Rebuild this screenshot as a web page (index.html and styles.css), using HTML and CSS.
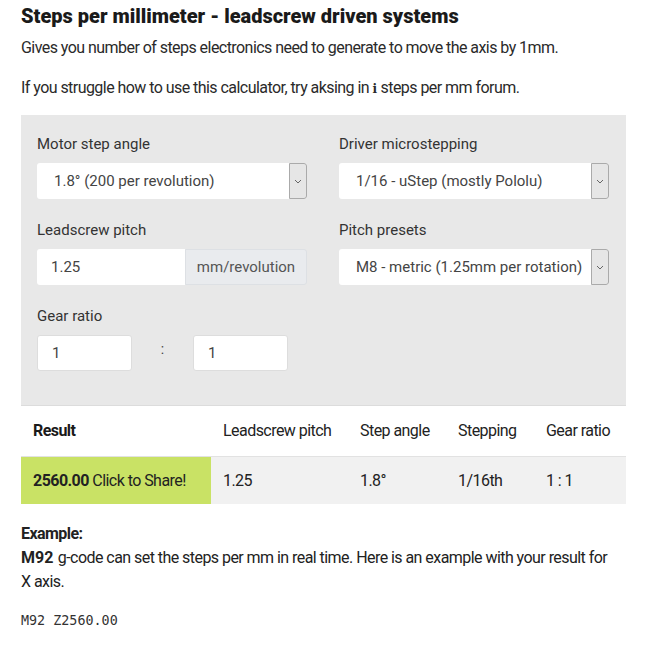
FILE: index.html
```html
<!DOCTYPE html>
<html>
<head>
    <title>Steps per millimeter - leadscrew</title>
    <link rel="stylesheet" href="styles.css">
</head>
<body>
    <div class="page">
        <h1>Steps per millimeter - leadscrew driven systems</h1>
        <p class="intro">Gives you number of steps electronics need to generate to move the axis by 1mm.</p>
        <p class="intro">If you struggle how to use this calculator, try aksing in <span class="info">i</span> steps per mm forum.</p>

        <div class="calc">
            <div class="field">
                <label>Motor step angle</label>
                <div class="select">
                    <span>1.8° (200 per revolution)</span>
                    <span class="caret"><svg width="8" height="5" viewBox="0 0 8 5"><path d="M1 1l3 3 3-3" fill="none" stroke="#666" stroke-width="1"/></svg></span>
                </div>
            </div>
            <div class="field">
                <label>Driver microstepping</label>
                <div class="select">
                    <span>1/16 - uStep (mostly Pololu)</span>
                    <span class="caret"><svg width="8" height="5" viewBox="0 0 8 5"><path d="M1 1l3 3 3-3" fill="none" stroke="#666" stroke-width="1"/></svg></span>
                </div>
            </div>
            <div class="field">
                <label>Leadscrew pitch</label>
                <div class="input-group">
                    <span class="input wide">1.25</span>
                    <span class="addon">mm/revolution</span>
                </div>
            </div>
            <div class="field">
                <label>Pitch presets</label>
                <div class="select">
                    <span>M8 - metric (1.25mm per rotation)</span>
                    <span class="caret"><svg width="8" height="5" viewBox="0 0 8 5"><path d="M1 1l3 3 3-3" fill="none" stroke="#666" stroke-width="1"/></svg></span>
                </div>
            </div>
            <div class="field">
                <label>Gear ratio</label>
                <div class="gear">
                    <span class="input small">1</span>
                    <span class="colon">:</span>
                    <span class="input small">1</span>
                </div>
            </div>
        </div>

        <table class="result">
            <colgroup>
                <col style="width:190px">
                <col style="width:137px">
                <col style="width:98px">
                <col style="width:88px">
                <col>
            </colgroup>
            <tr class="head">
                <th>Result</th>
                <td>Leadscrew pitch</td>
                <td>Step angle</td>
                <td>Stepping</td>
                <td>Gear ratio</td>
            </tr>
            <tr class="values">
                <td class="share"><b>2560.00</b> Click to Share!</td>
                <td>1.25</td>
                <td>1.8°</td>
                <td>1/16th</td>
                <td>1 : 1</td>
            </tr>
        </table>

        <div class="example">
            <div class="example-title">Example:</div>
            <p><b>M92</b> g-code can set the steps per mm in real time. Here is an example with your result for<br>X axis.</p>
            <code>M92 Z2560.00</code>
        </div>
    </div>
</body>
</html>
```

FILE: styles.css
```css
body {
    margin: 0;
    background: #fff;
    color: #222;
    font-family: Roboto, "Liberation Sans", sans-serif;
}

.page {
    width: 605px;
    padding: 4px 0 0 21px;
}

h1 {
    margin: 0;
    font-size: 20px;
    line-height: 24px;
    font-weight: 900;
    color: #1a1a1a;
}

.intro {
    margin: 9px 0 0;
    font-size: 16px;
    line-height: 22px;
    letter-spacing: -0.55px;
    color: #2a2a2a;
}

.intro + .intro {
    margin-top: 18px;
}

.info {
    font-family: "DejaVu Serif", serif;
    font-weight: bold;
    font-size: 12px;
    letter-spacing: 0;
}

/* Grey calculator panel */
.calc {
    margin-top: 15px;
    background: #e8e8e8;
    border-bottom: 1px solid #dcdcdc;
    padding: 18px 16px 34px;
    display: grid;
    grid-template-columns: 270px 270px;
    column-gap: 32px;
    row-gap: 20px;
}

.field label {
    display: block;
    font-size: 15px;
    line-height: 22px;
    color: #333;
    margin-bottom: 8px;
}

.select {
    display: flex;
    height: 36px;
    background: #fff;
    border-radius: 3px;
    font-size: 15px;
    color: #444;
}

.select span:first-child {
    flex: 1;
    display: flex;
    align-items: center;
    padding-left: 17px;
}

.caret {
    width: 16px;
    display: flex;
    align-items: center;
    justify-content: center;
    background: #e6e6e6;
    border: 1px solid #aaa;
    border-radius: 0 3px 3px 0;
}

.input-group {
    display: flex;
    height: 36px;
}

.input {
    display: flex;
    align-items: center;
    padding-left: 14px;
    background: #fff;
    border-radius: 3px;
    font-size: 15px;
    color: #444;
    height: 36px;
    box-sizing: border-box;
}

.input.wide {
    width: 148px;
    border-radius: 3px 0 0 3px;
}

.addon {
    flex: 1;
    display: flex;
    align-items: center;
    justify-content: center;
    background: #e9ebee;
    border: 1px solid #dde0e4;
    border-radius: 0 3px 3px 0;
    font-size: 15px;
    color: #555;
}

.gear {
    display: flex;
    align-items: center;
    height: 36px;
}

.input.small {
    width: 95px;
    border: 1px solid #ddd;
}

.colon {
    width: 61px;
    text-align: center;
    font-size: 14px;
    line-height: 14px;
    color: #444;
    padding-bottom: 8px;
}

/* Result table */
.result {
    width: 605px;
    border-collapse: collapse;
    font-size: 16px;
    letter-spacing: -0.55px;
}

.result td, .result th {
    padding: 0 12px;
    text-align: left;
}

.result .head {
    height: 50px;
    border-bottom: 1px solid #e2e2e2;
}

.result th {
    font-weight: bold;
    color: #1a1a1a;
}

.result .values {
    height: 48px;
    background: #f1f1f1;
}

.share {
    background: #c9e265;
}

/* Example */
.example {
    margin-top: 18px;
    font-size: 16px;
    line-height: 24px;
    letter-spacing: -0.55px;
}

.example-title {
    font-weight: bold;
}

.example p {
    margin: 0;
}

.example p b {
    letter-spacing: 0;
    margin-right: 1px;
}

.example code {
    display: block;
    margin-top: 19px;
    font-family: "DejaVu Sans Mono", monospace;
    font-size: 13.4px;
    line-height: 16px;
    letter-spacing: 0;
    color: #333;
}
```
